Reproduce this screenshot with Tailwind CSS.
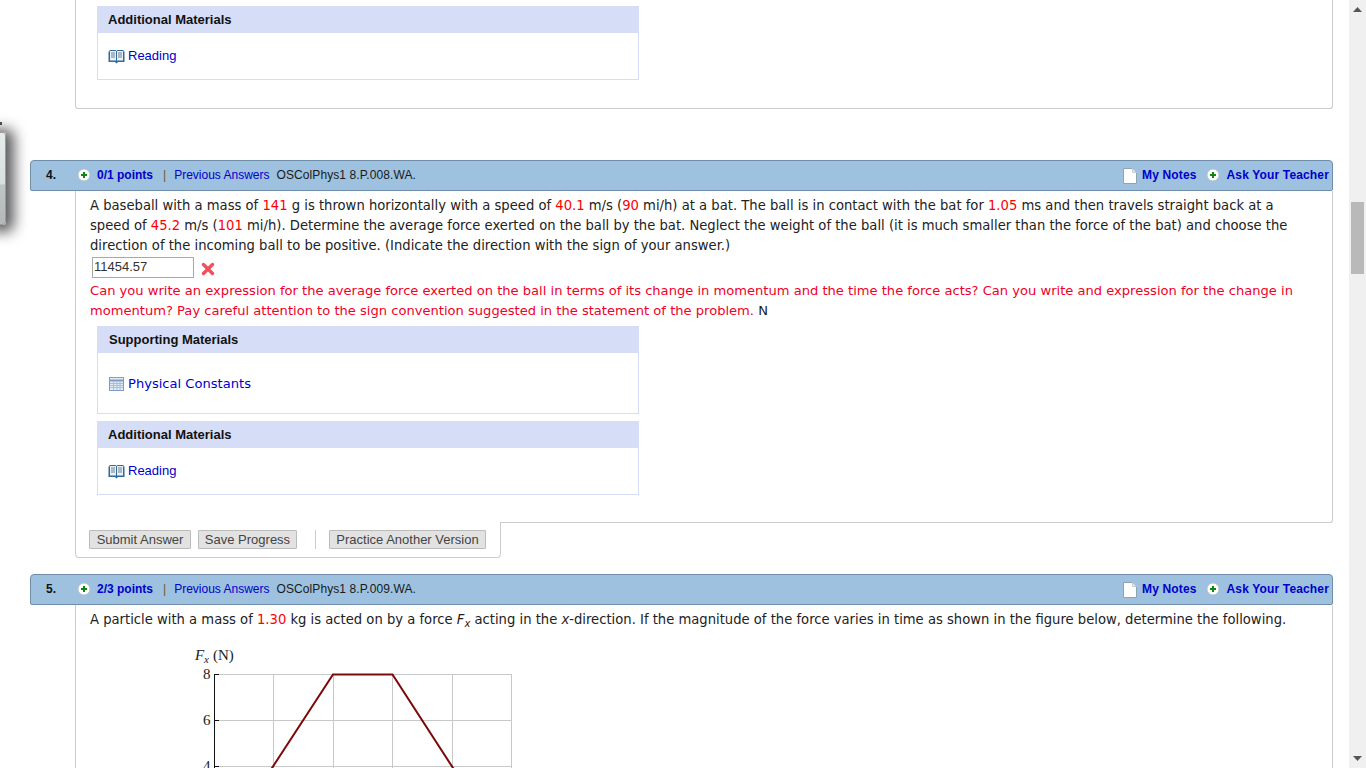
<!DOCTYPE html>
<html lang="en">

<head>
    <meta charset="UTF-8" />
    <title>Assignment</title>
    <script src="https://cdn.jsdelivr.net/npm/@tailwindcss/browser@4"></script>
</head>

<body class="h-screen overflow-hidden bg-white flex font-['Liberation_Sans',Arial,sans-serif] text-[#222]">
    <!-- left slide-out widget -->
    <div class="absolute left-0 top-[122px] w-[2px] h-[3px] bg-[#555]"></div>
    <div class="absolute left-[-10px] top-[132px] w-[16px] h-[93px] rounded-[3px] border border-[#9a9a9a] bg-[linear-gradient(#e6ebeb_0%,#d8dfdf_56%,#bfc4c4_57%,#b4b9b9_100%)] shadow-[3px_2px_14px_5px_rgba(0,0,0,0.65)]"></div>

    <main class="w-[1349px] h-[768px] overflow-hidden pl-[30px] shrink-0">
        <div class="w-[1303px]">
            <!-- end of question 3 -->
            <div class="ml-[45px] h-[109px] pt-[6px] pl-[21px] border-x border-b border-[#ccc] rounded-b-[3px]">
                <div class="w-[542px] h-[74px] border border-[#d6ddf6]">
                    <div class="h-[27px] -mt-px -mx-px bg-[#d6ddf6] pl-[11px] text-[13px] leading-[27px] font-bold text-[#111]">Additional Materials</div>
                    <div class="flex items-center gap-[3px] pl-[10px] pt-[14px] text-[13px] leading-[18px] text-[#0000cc]">
                        <svg width="17" height="15" viewBox="0 0 17 15"><path d="M.5 2.500h1V1h6l1 1 1-1h6v1.500h1v10.500h-6.500l-1.500 1.500-1.500-1.500H.5z" fill="#2f6a9a"/><path d="M2 2h6v9.500H2zM9 2h6v9.500H9z" fill="#e8f0f6"/><path d="M3 4h4M3 6h4M3 8h4M10 4h4M10 6h4M10 8h4" stroke="#6f8296"/></svg>
                        <span>Reading</span>
                    </div>
                </div>
            </div>

            <!-- question 4 -->
            <div class="mt-[51px] h-[31px] pb-[2px] flex items-center border border-[#6f8ca8] rounded-t-[4px] rounded-b-[2px] bg-[#9dc1de] text-[12px]">
                <span class="w-[46px] pl-[15px] font-bold text-[#111]">4.</span>
                <svg width="14" height="14" viewBox="0 0 14 14"><circle cx="7" cy="7" r="6" fill="#fff" stroke="#b8c4cc"/><path d="M7 4v6M4 7h6" stroke="#0a8a0a" stroke-width="2"/></svg>
                <span class="ml-[6px] font-bold text-[#0000cc]">0/1 points</span>
                <span class="ml-[10px] text-[#6b5a2a]">|</span>
                <span class="ml-[8px] text-[#0000cc]">Previous Answers</span>
                <span class="ml-[7px] tracking-[0.09px] text-[#1a1a1a]">OSColPhys1 8.P.008.WA.</span>
                <span class="ml-auto flex items-center pr-[3px] tracking-[0.15px]">
                    <svg class="mt-[2px]" width="14" height="16" viewBox="0 0 14 16"><path d="M.5.500h9l4 4v11H.5z" fill="#fff" stroke="#8fa3b5"/><path d="M9.500.500v4h4" fill="#e8e8e8" stroke="#c4ccd4"/></svg>
                    <span class="ml-[5px] font-bold text-[#0000cc]">My Notes</span>
                    <svg class="ml-[9px]" width="14" height="14" viewBox="0 0 14 14"><circle cx="7" cy="7" r="6" fill="#fff" stroke="#b8c4cc"/><path d="M7 4v6M4 7h6" stroke="#0a8a0a" stroke-width="2"/></svg>
                    <span class="ml-[7px] font-bold text-[#0000cc]">Ask Your Teacher</span>
                </span>
            </div>
            <div class="ml-[45px] h-[332px] border-x border-b border-[#ccc] rounded-br-[3px] pl-[14px] font-['DejaVu_Sans',Verdana,sans-serif] text-[13.16px] leading-[20px]">
                <p class="pt-[5px] w-[1225px]">A baseball with a mass of <span class="text-[#f00]">141</span> g is thrown horizontally with a speed of <span class="text-[#f00]">40.1</span> m/s (<span class="text-[#f00]">90</span> mi/h) at a bat. The ball is in contact with the bat for <span class="text-[#f00]">1.05</span> ms and then travels straight back at a speed of <span class="text-[#f00]">45.2</span> m/s (<span class="text-[#f00]">101</span> mi/h). Determine the average force exerted on the ball by the bat. Neglect the weight of the ball (it is much smaller than the force of the bat) and choose the direction of the incoming ball to be positive. (Indicate the direction with the sign of your answer.)</p>
                <div class="mt-[1px] ml-[2px] flex items-center h-[21px]">
                    <div class="w-[102px] h-[21px] border border-[#a8a8a8] pl-[1px] font-['Liberation_Sans',Arial,sans-serif] text-[13px] leading-[18px] text-[#333]">11454.57</div>
                    <svg class="ml-[7px] mt-[2px]" width="14" height="14" viewBox="0 0 14 14"><path d="M2.500 2.500l9 9M11.500 2.500l-9 9" stroke="#f0505a" stroke-width="3.400" stroke-linecap="round"/></svg>
                </div>
                <p class="mt-[3px] w-[1225px] text-[13.08px] text-[#f0002a]">Can you write an expression for the average force exerted on the ball in terms of its change in momentum and the time the force acts? Can you write and expression for the change in momentum? Pay careful attention to the sign convention suggested in the statement of the problem. <span class="text-[#222]">N</span></p>

                <div class="mt-[5px] ml-[7px] w-[542px] h-[88px] border border-[#d6ddf6] font-['Liberation_Sans',Arial,sans-serif]">
                    <div class="h-[27px] -mt-px -mx-px bg-[#d6ddf6] pl-[12px] text-[13px] leading-[27px] font-bold text-[#111]">Supporting Materials</div>
                    <div class="flex items-center gap-[4px] pl-[11px] pt-[22px] font-['DejaVu_Sans',Verdana,sans-serif] text-[13.08px] leading-[18px] text-[#0000cc]">
                        <svg width="15" height="14" viewBox="0 0 15 14"><rect x=".5" y=".5" width="14" height="13" fill="#e4edf8" stroke="#7f9cc4"/><path d="M1 3.500h13" stroke="#7f9cc4" stroke-width="2"/><path d="M1 6.500h13M1 8.500h13M1 10.500h13M4.500 4v9M8 4v9M11 4v9" stroke="#a8bcd8"/></svg>
                        <span>Physical Constants</span>
                    </div>
                </div>
                <div class="mt-[7px] ml-[7px] w-[542px] h-[74px] border border-[#d6ddf6] font-['Liberation_Sans',Arial,sans-serif]">
                    <div class="h-[27px] -mt-px -mx-px bg-[#d6ddf6] pl-[11px] text-[13px] leading-[27px] font-bold text-[#111]">Additional Materials</div>
                    <div class="flex items-center gap-[3px] pl-[10px] pt-[14px] text-[13px] leading-[18px] text-[#0000cc]">
                        <svg width="17" height="15" viewBox="0 0 17 15"><path d="M.5 2.500h1V1h6l1 1 1-1h6v1.500h1v10.500h-6.500l-1.500 1.500-1.500-1.500H.5z" fill="#2f6a9a"/><path d="M2 2h6v9.500H2zM9 2h6v9.500H9z" fill="#e8f0f6"/><path d="M3 4h4M3 6h4M3 8h4M10 4h4M10 6h4M10 8h4" stroke="#6f8296"/></svg>
                        <span>Reading</span>
                    </div>
                </div>
            </div>
            <div class="ml-[45px] -mt-px relative w-[426px] h-[36px] bg-white border-x border-b border-[#ccc] rounded-b-[4px] flex items-start pt-[8px] pl-[13px] text-[13px] text-[#444] whitespace-nowrap">
                <button class="w-[102px] h-[19px] leading-[17px] bg-[#e2e2e2] border border-[#bbb] rounded-[1px]">Submit Answer</button>
                <button class="ml-[7px] w-[99px] h-[19px] leading-[17px] bg-[#e2e2e2] border border-[#bbb] rounded-[1px]">Save Progress</button>
                <span class="ml-[18px] w-px h-[19px] bg-[#ccc]"></span>
                <button class="ml-[13px] w-[157px] h-[19px] leading-[17px] bg-[#e2e2e2] border border-[#bbb] rounded-[1px]">Practice Another Version</button>
            </div>

            <!-- question 5 -->
            <div class="mt-[16px] h-[31px] pb-[2px] flex items-center border border-[#6f8ca8] rounded-t-[4px] rounded-b-[2px] bg-[#9dc1de] text-[12px]">
                <span class="w-[46px] pl-[15px] font-bold text-[#111]">5.</span>
                <svg width="14" height="14" viewBox="0 0 14 14"><circle cx="7" cy="7" r="6" fill="#fff" stroke="#b8c4cc"/><path d="M7 4v6M4 7h6" stroke="#0a8a0a" stroke-width="2"/></svg>
                <span class="ml-[6px] font-bold text-[#0000cc]">2/3 points</span>
                <span class="ml-[10px] text-[#6b5a2a]">|</span>
                <span class="ml-[8px] text-[#0000cc]">Previous Answers</span>
                <span class="ml-[7px] tracking-[0.09px] text-[#1a1a1a]">OSColPhys1 8.P.009.WA.</span>
                <span class="ml-auto flex items-center pr-[3px] tracking-[0.15px]">
                    <svg class="mt-[2px]" width="14" height="16" viewBox="0 0 14 16"><path d="M.5.500h9l4 4v11H.5z" fill="#fff" stroke="#8fa3b5"/><path d="M9.500.500v4h4" fill="#e8e8e8" stroke="#c4ccd4"/></svg>
                    <span class="ml-[5px] font-bold text-[#0000cc]">My Notes</span>
                    <svg class="ml-[9px]" width="14" height="14" viewBox="0 0 14 14"><circle cx="7" cy="7" r="6" fill="#fff" stroke="#b8c4cc"/><path d="M7 4v6M4 7h6" stroke="#0a8a0a" stroke-width="2"/></svg>
                    <span class="ml-[7px] font-bold text-[#0000cc]">Ask Your Teacher</span>
                </span>
            </div>
            <div class="ml-[45px] h-[200px] border-x border-[#ccc] pl-[14px] font-['DejaVu_Sans',Verdana,sans-serif] text-[13.16px] leading-[20px]">
                <p class="pt-[5px]">A particle with a mass of <span class="text-[#f00]">1.30</span> kg is acted on by a force <i>F<sub class="text-[10px]">x</sub></i> acting in the <i>x</i>-direction. If the magnitude of the force varies in time as shown in the figure below, determine the following.</p>
                <svg class="mt-[16px] ml-[90px]" width="360" height="122" viewBox="0 0 360 122" font-family="Liberation Serif, serif" font-size="15" fill="#222">
                    <text x="15" y="14" font-style="italic">F</text><text x="24" y="17" font-size="11" font-style="italic">x</text><text x="33" y="14">(N)</text>
                    <text x="23" y="33">8</text><text x="23" y="79">6</text><text x="23" y="125">4</text>
                    <path d="M35 28.500H331.500M35 74.500H331.500M35 120.500H331.500M93.500 28V122M153.500 28V122M212.500 28V122M272.500 28V122M331.500 28V122" stroke="#c8c8c8" fill="none"/>
                    <path d="M34.500 28V122M34 28.500H39M34 74.500H39M34 120.500H39" stroke="#111" fill="none"/>
                    <path d="M91 123.500L153 28.500H212.500L274 123.500" stroke="#7a0a0a" stroke-width="2" fill="none"/>
                </svg>
            </div>
        </div>
    </main>

    <!-- scrollbar -->
    <aside class="w-[17px] h-[768px] bg-[#f0f0f0] flex flex-col items-center shrink-0">
        <svg class="mt-[7px]" width="9" height="5" viewBox="0 0 9 5"><path d="M4.500 0L9 5H0z" fill="#555"/></svg>
        <div class="mt-[190px] w-[13px] h-[72px] bg-[#b9b9b9]"></div>
        <svg class="mt-auto mb-[7px]" width="9" height="5" viewBox="0 0 9 5"><path d="M0 0h9L4.500 5z" fill="#555"/></svg>
    </aside>
</body>

</html>
